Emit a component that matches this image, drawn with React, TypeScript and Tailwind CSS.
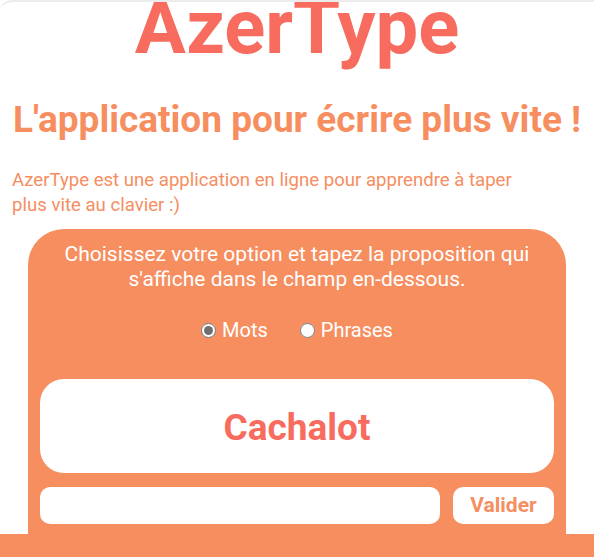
import React from 'react';

const App = () => {
  return (
    <div className="min-h-[557px] bg-white font-['Roboto','Liberation_Sans',sans-serif] border-t-2 border-[#ececec] rounded-tl-xl overflow-hidden flex flex-col">
      {/* Header */}
      <h1 className="text-center text-[76px] leading-none font-bold text-[#F76C5E] -mt-[13px]">AzerType</h1>
      <h2 className="mt-[33px] text-center text-[37px] leading-[43px] font-bold text-[#F68E5F]">
        L'application pour écrire plus vite !
      </h2>
      <p className="mt-[27px] px-3 max-w-[540px] text-[18.6px] leading-[25px] text-[#F68E5F]">
        AzerType est une application en ligne pour apprendre à taper plus vite au clavier :)
      </p>

      {/* Zone de jeu */}
      <section className="mt-[11px] mx-7 flex-1 bg-[#F68E5F] rounded-t-[36px] px-3 pt-[13px] pb-[10px] flex flex-col">
        <p className="text-center text-white text-[21px] leading-[25px] px-6">
          Choisissez votre option et tapez la proposition qui s'affiche dans le champ en-dessous.
        </p>
        <div className="mt-[26px] flex justify-center items-center gap-8 text-white text-[20px] leading-[24px]">
          <label className="flex items-center gap-[6px]">
            <input type="radio" name="option" defaultChecked className="w-[15px] h-[15px] accent-[#6f6f6f] m-0" />
            Mots
          </label>
          <label className="flex items-center gap-[6px]">
            <input type="radio" name="option" className="w-[15px] h-[15px] accent-[#6f6f6f] m-0" />
            Phrases
          </label>
        </div>
        <div className="mt-[37px] h-[94px] pt-[3px] bg-white rounded-3xl flex items-center justify-center">
          <span className="text-[37px] leading-none font-bold text-[#F76C5E]">Cachalot</span>
        </div>
        <div className="mt-[14px] flex gap-[13px]">
          <input type="text" className="flex-1 h-[37px] bg-white rounded-[10px] outline-none px-3" />
          <button className="w-[101px] h-[37px] bg-white rounded-[10px] text-[21px] font-bold text-[#F68E5F]">
            Valider
          </button>
        </div>
      </section>

      {/* Footer */}
      <footer className="h-[23px] bg-[#F68E5F]" />
    </div>
  );
};

export default App;
